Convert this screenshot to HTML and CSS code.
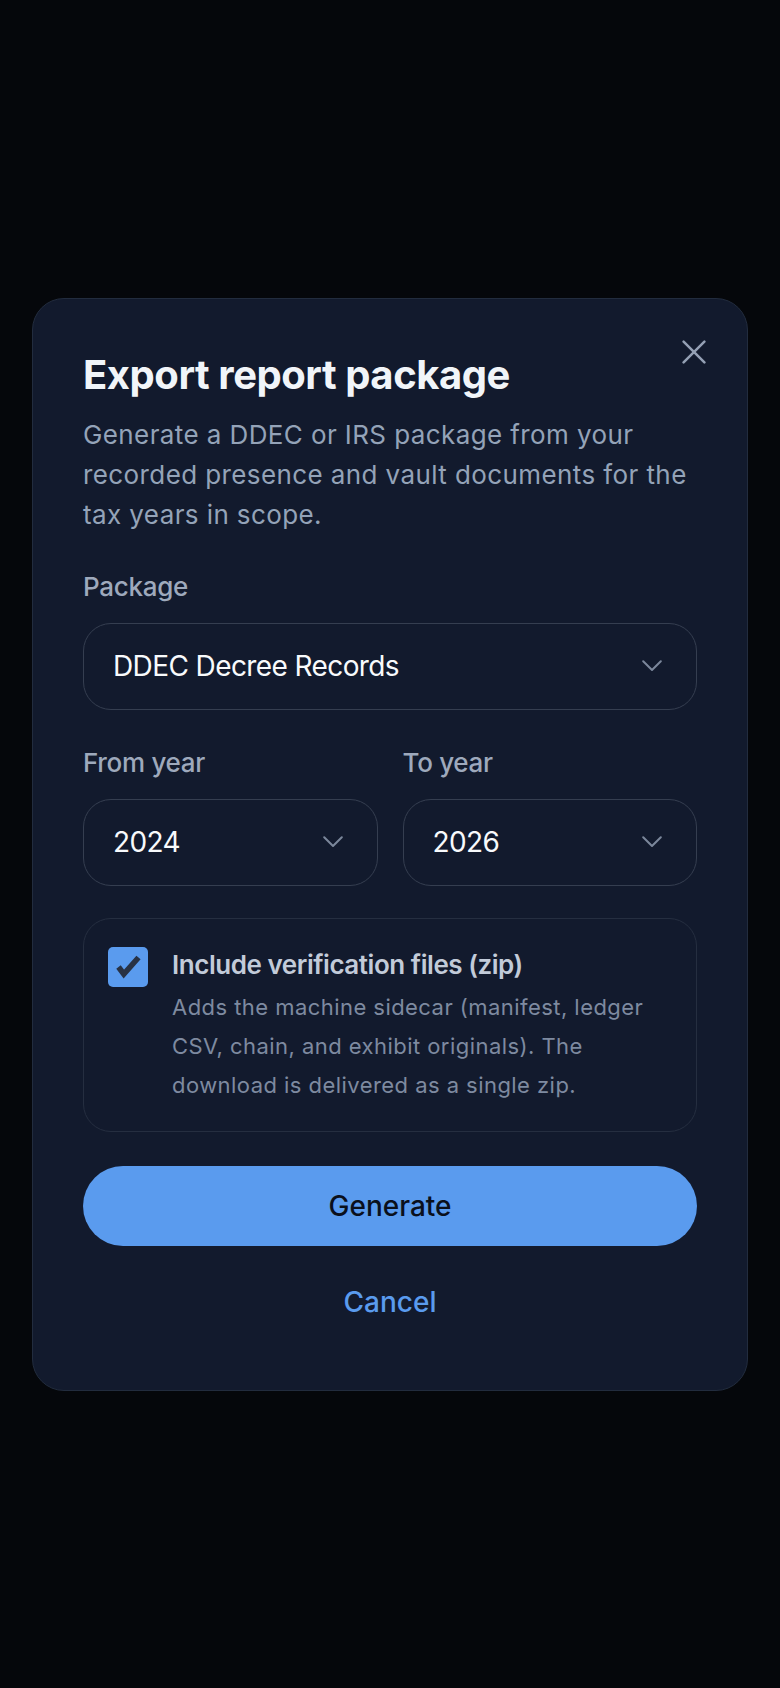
FILE: index.html
```html
<!DOCTYPE html>
<html lang="en">
<head>
<meta charset="utf-8">
<title>Export report package</title>
<link rel="stylesheet" href="styles.css">
</head>
<body>
<div class="backdrop">
  <div class="modal" role="dialog" aria-labelledby="dlg-title">
    <button class="close" aria-label="Close">
      <svg width="24" height="24" viewBox="0 0 24 24"><path d="M1.6 1.6 22.4 22.4 M22.4 1.6 1.6 22.4" fill="none" stroke="currentColor" stroke-width="2.5" stroke-linecap="round"/></svg>
    </button>
    <h1 id="dlg-title" class="title">Export report package</h1>
    <p class="lead">Generate a DDEC or IRS package from your recorded presence and vault documents for the tax years in scope.</p>

    <div class="field">
      <div class="label">Package</div>
      <div class="select">
        <span class="value">DDEC Decree Records</span>
        <svg class="chev" width="20" height="12" viewBox="0 0 20 12"><polyline points="1.2,1.2 10,10 18.8,1.2" fill="none" stroke="currentColor" stroke-width="2" stroke-linecap="round" stroke-linejoin="round"/></svg>
      </div>
    </div>

    <div class="row">
      <div class="field">
        <div class="label">From year</div>
        <div class="select">
          <span class="value">2024</span>
          <svg class="chev" width="20" height="12" viewBox="0 0 20 12"><polyline points="1.2,1.2 10,10 18.8,1.2" fill="none" stroke="currentColor" stroke-width="2" stroke-linecap="round" stroke-linejoin="round"/></svg>
        </div>
      </div>
      <div class="field">
        <div class="label">To year</div>
        <div class="select">
          <span class="value">2026</span>
          <svg class="chev" width="20" height="12" viewBox="0 0 20 12"><polyline points="1.2,1.2 10,10 18.8,1.2" fill="none" stroke="currentColor" stroke-width="2" stroke-linecap="round" stroke-linejoin="round"/></svg>
        </div>
      </div>
    </div>

    <div class="option">
      <svg class="check" width="40" height="40" viewBox="0 0 40 40"><rect width="40" height="40" rx="5" fill="#5a9bee"/><polyline points="10.5,20 15.8,27 30.5,10.5" fill="none" stroke="#283244" stroke-width="5.6" stroke-linejoin="miter"/></svg>
      <div class="option-text">
        <div class="option-title">Include verification files (zip)</div>
        <div class="option-desc">Adds the machine sidecar (manifest, ledger CSV, chain, and exhibit originals). The download is delivered as a single zip.</div>
      </div>
    </div>

    <button class="primary">Generate</button>
    <button class="cancel">Cancel</button>
  </div>
</div>
</body>
</html>
```

FILE: styles.css
```css
* { box-sizing: border-box; }
html, body { margin: 0; padding: 0; }
body {
  background: #05070b;
  font-family: Inter, "Noto Sans", "Liberation Sans", sans-serif;
  color: #f1f5f9;
}
.backdrop {
  min-height: 1688px;
  display: flex;
  align-items: center;
  justify-content: center;
}
.modal {
  position: relative;
  width: 716px;
  background: #121a2d;
  border: 1px solid #222c3e;
  border-radius: 32px;
  padding: 52px 50px 60px;
  display: flex;
  flex-direction: column;
}
.close {
  position: absolute;
  top: 41px;
  right: 41px;
  width: 24px;
  height: 24px;
  padding: 0;
  border: 0;
  background: none;
  color: #94a0b4;
  display: block;
}
.close svg { display: block; }
.title {
  margin: 0;
  font-size: 40px;
  line-height: 48px;
  font-weight: 700;
  color: #f1f5f9;
  letter-spacing: -0.45px;
}
.lead {
  margin: 16px 0 0;
  font-size: 26px;
  line-height: 40px;
  color: #94a3b8;
  letter-spacing: 0.4px;
}
.field {
  display: flex;
  flex-direction: column;
  margin-top: 36px;
  min-width: 0;
}
.label {
  font-size: 26px;
  line-height: 32px;
  font-weight: 500;
  color: #9ea9bc;
  margin-bottom: 20px;
  letter-spacing: -0.3px;
}
.select {
  height: 87px;
  border: 1px solid #353e50;
  border-radius: 28px;
  display: flex;
  align-items: center;
  justify-content: space-between;
  padding: 0 34px 0 29px;
}
.value {
  font-size: 28px;
  color: #f8fafc;
  letter-spacing: -0.6px;
}
.chev { color: #7b879b; display: block; }
.row {
  display: grid;
  grid-template-columns: 1fr 1fr;
  column-gap: 25px;
}
.row .field { margin-top: 37px; }
.option {
  margin-top: 32px;
  border: 1px solid #252e40;
  border-radius: 28px;
  padding: 28px 40px 26px 24px;
  display: flex;
  gap: 24px;
  align-items: flex-start;
}
.check { flex: none; display: block; }
.option-text { flex: 1; min-width: 0; }
.option-title {
  font-size: 26px;
  line-height: 36px;
  font-weight: 600;
  color: #c2cbd9;
  letter-spacing: -0.45px;
}
.option-desc {
  margin-top: 5px;
  font-size: 22px;
  line-height: 39px;
  color: #7e8aa0;
  letter-spacing: 0.45px;
}
.primary {
  margin-top: 34px;
  height: 80px;
  border: 0;
  border-radius: 40px;
  background: #5a9bee;
  color: #0a101c;
  font-family: inherit;
  font-size: 28px;
  font-weight: 500;
}
.cancel {
  margin-top: 28px;
  padding: 8px 0;
  border: 0;
  background: none;
  color: #5a9bee;
  font-family: inherit;
  font-size: 28px;
  line-height: 40px;
  font-weight: 500;
}
```
